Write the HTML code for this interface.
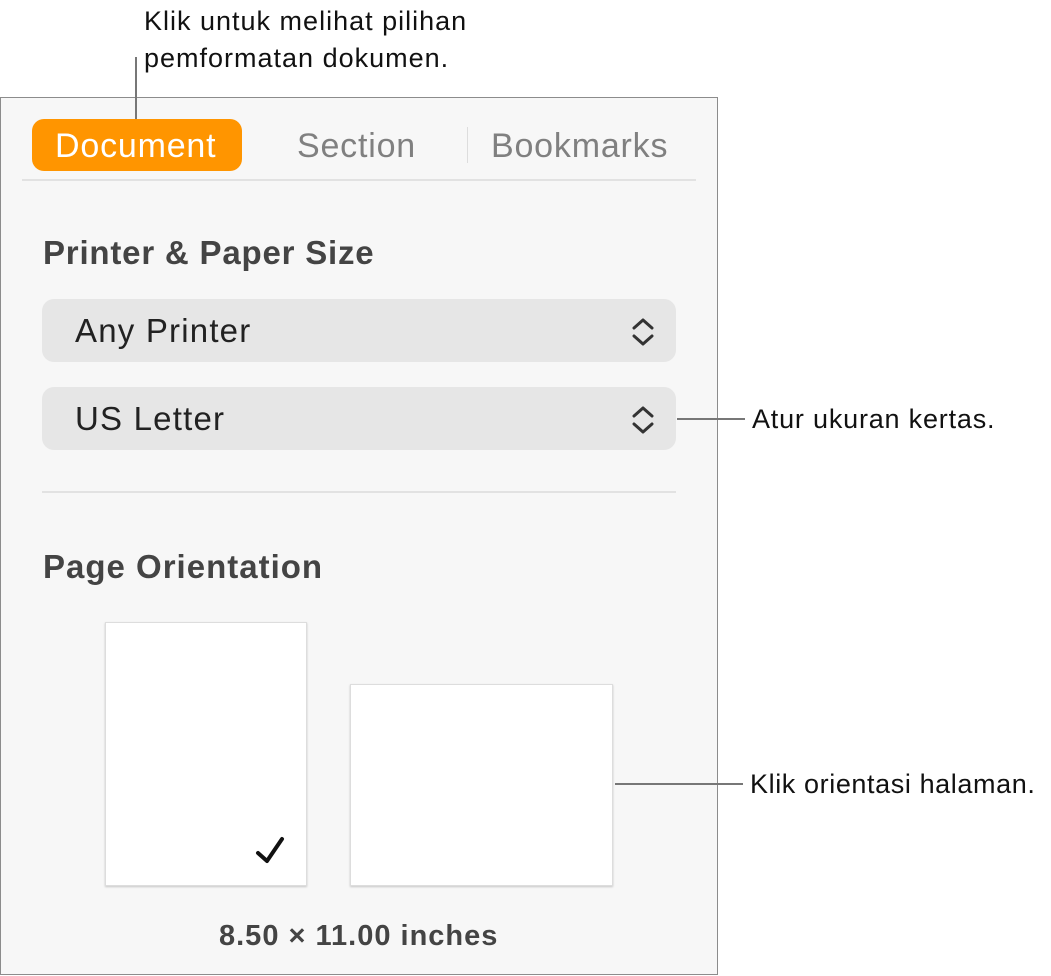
<!DOCTYPE html>
<html><head><meta charset="utf-8"><style>
html,body{margin:0;padding:0;background:#fff;width:1051px;height:976px;overflow:hidden;font-family:"Liberation Sans",sans-serif;position:relative}
.a{position:absolute;white-space:nowrap}
.t{color:#111;font-size:27px;line-height:37px}
.panel{left:0;top:97px;width:716px;height:876px;border:1px solid #8c8c8c;background:#f7f7f7}
.h{font-weight:bold;color:#444;font-size:33px}
.pop{left:42px;width:634px;height:63px;background:#e6e6e6;border-radius:12px}
.pop span{position:absolute;left:33px;top:13px;font-size:33px;color:#222;letter-spacing:1.2px}
.line{background:#777}
.tab{font-size:34px;letter-spacing:0.8px;top:127px}
.pg{background:#fff;border:1px solid #ddd;box-shadow:0 1px 2px rgba(0,0,0,.2)}
</style></head><body>
<div class="a t" style="left:144px;top:3px;letter-spacing:1px">Klik untuk melihat pilihan<br>pemformatan dokumen.</div>
<div class="a panel"></div>
<div class="a line" style="left:135px;top:57px;width:2px;height:62px"></div>
<div class="a" style="left:32px;top:119px;width:210px;height:52px;background:#ff9500;border-radius:12px"></div>
<div class="a tab" style="left:55px;color:#fff">Document</div>
<div class="a tab" style="left:297px;color:#808080">Section</div>
<div class="a" style="left:467px;top:127px;width:1px;height:36px;background:#ddd"></div>
<div class="a tab" style="left:491px;color:#808080">Bookmarks</div>
<div class="a" style="left:22px;top:179px;width:674px;height:2px;background:#e2e2e2"></div>
<div class="a h" style="left:43px;top:234px;letter-spacing:0.8px">Printer &amp; Paper Size</div>
<div class="a pop" style="top:299px"><span>Any Printer</span></div>
<div class="a pop" style="top:387px"><span>US Letter</span></div>
<svg class="a" style="left:630px;top:317px" width="26" height="30" viewBox="0 0 26 30"><path d="M4 11 L13 3 L22 11 M4 19 L13 27 L22 19" fill="none" stroke="#333" stroke-width="3" stroke-linecap="round" stroke-linejoin="round"/></svg>
<svg class="a" style="left:630px;top:405px" width="26" height="30" viewBox="0 0 26 30"><path d="M4 11 L13 3 L22 11 M4 19 L13 27 L22 19" fill="none" stroke="#333" stroke-width="3" stroke-linecap="round" stroke-linejoin="round"/></svg>
<div class="a" style="left:42px;top:491px;width:634px;height:2px;background:#e2e2e2"></div>
<div class="a h" style="left:43px;top:548px;letter-spacing:1px">Page Orientation</div>
<div class="a pg" style="left:105px;top:622px;width:200px;height:262px"></div>
<svg class="a" style="left:253px;top:835px" width="36" height="32" viewBox="0 0 36 32"><path d="M5 18 L14 26 L29 4" fill="none" stroke="#111" stroke-width="4" stroke-linecap="round" stroke-linejoin="round"/></svg>
<div class="a pg" style="left:350px;top:684px;width:261px;height:200px"></div>
<div class="a" style="left:219px;top:920px;font-size:29px;font-weight:bold;color:#444;letter-spacing:1px">8.50 × 11.00 inches</div>
<div class="a line" style="left:677px;top:418px;width:68px;height:2px"></div>
<div class="a t" style="left:752px;top:401px;letter-spacing:0.8px">Atur ukuran kertas.</div>
<div class="a line" style="left:615px;top:783px;width:128px;height:2px"></div>
<div class="a t" style="left:750px;top:766px;letter-spacing:0.6px">Klik orientasi halaman.</div>
</body></html>
